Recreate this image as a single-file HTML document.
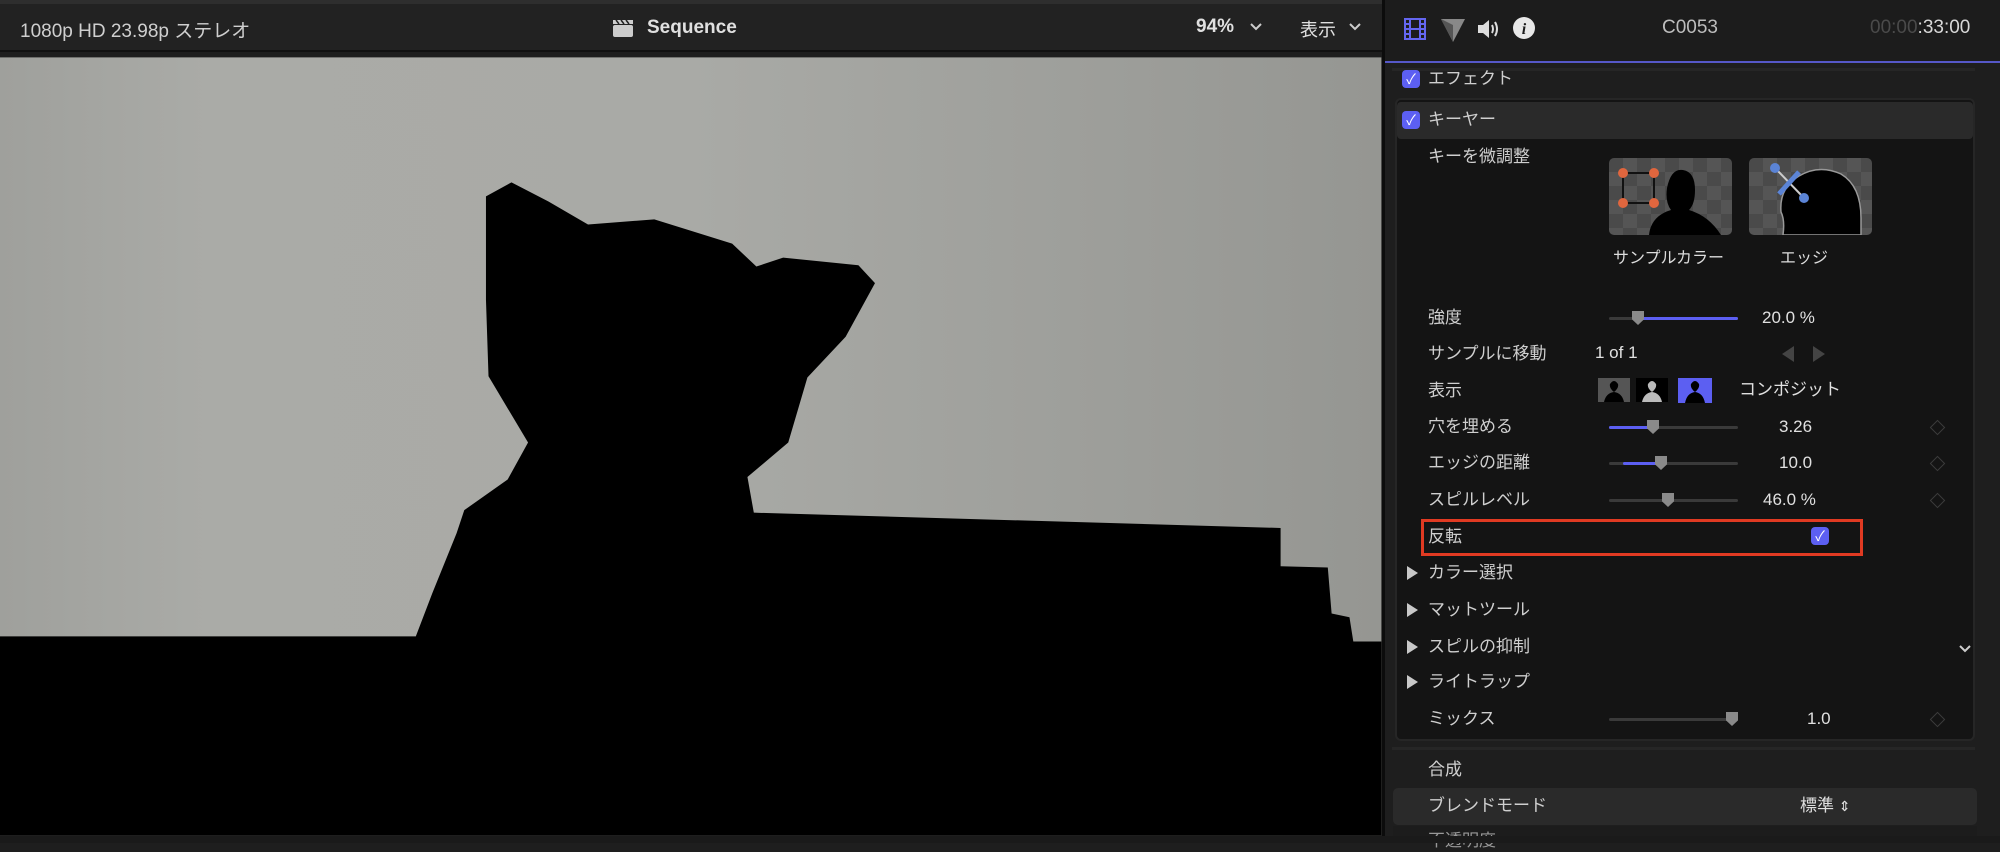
<!DOCTYPE html>
<html><head><meta charset="utf-8"><style>
*{margin:0;padding:0;box-sizing:border-box}
body{width:2000px;height:843px;background:#1e1e1e;overflow:hidden;position:relative;font-family:"Liberation Sans","Noto Sans CJK JP",sans-serif;color:#d0d0d0}
.a{position:absolute;white-space:nowrap}
.t{position:absolute;white-space:nowrap;font-size:17px;line-height:22px;color:#cfcfcf}
.cb{position:absolute;width:18px;height:18px;border-radius:4px;background:#5c5ff2;color:#fff;font-size:14px;line-height:18px;text-align:center}
.sl{position:absolute;height:3px;background:#3a3a3a;border-radius:2px}
.fill{position:absolute;height:3px;background:#5c5ff2;border-radius:2px}
.kn{position:absolute;width:12px;height:14px;background:#8a8a8a;clip-path:polygon(0 0,100% 0,100% 60%,50% 100%,0 60%)}
.dm{position:absolute;width:11px;height:11px;border:1px solid #3c3c3c;transform:rotate(45deg)}
.tri{position:absolute;width:0;height:0;border-left:11px solid #c8c8c8;border-top:7px solid transparent;border-bottom:7px solid transparent}
.v{position:absolute;font-size:17px;line-height:22px;color:#e0e0e0;white-space:nowrap}
</style></head><body>
<div class="a" style="left:0;top:0;width:1382px;height:52px;background:#222;border-top:4px solid #2e2e2e;border-bottom:2px solid #111"></div>
<div class="a" style="left:20px;top:16px;font-size:19px;color:#cfcfcf">1080p HD 23.98p ステレオ</div>
<svg class="a" style="left:612px;top:18px" width="22" height="20" viewBox="0 0 22 20"><rect x="1" y="7" width="20" height="12" rx="2" fill="#ccc"/><path d="M1 2 L21 2 L21 6 L1 6Z" fill="#ccc"/><path d="M4 2 L7 6 M9 2 L12 6 M14 2 L17 6" stroke="#222" stroke-width="1.5"/></svg>
<div class="a" style="left:647px;top:17px;font-size:19px;color:#e0e0e0;font-weight:bold">Sequence</div>
<div class="a" style="left:1196px;top:16px;font-size:19px;color:#e0e0e0;font-weight:bold">94%</div>
<svg class="a" style="left:1250px;top:23px" width="12" height="8"><path d="M1 1 L6 6 L11 1" stroke="#ccc" stroke-width="2" fill="none"/></svg>
<div class="a" style="left:1300px;top:16px;font-size:18px;color:#e0e0e0">表示</div>
<svg class="a" style="left:1349px;top:23px" width="12" height="8"><path d="M1 1 L6 6 L11 1" stroke="#ccc" stroke-width="2" fill="none"/></svg>
<svg class="a" style="left:0;top:0" width="1382" height="843" viewBox="0 0 1083.5 661" preserveAspectRatio="none">
<defs><linearGradient id="g" x1="0" x2="1" y1="0" y2="0"><stop offset="0" stop-color="#9fa09c"/><stop offset="0.15" stop-color="#aaaba7"/><stop offset="0.5" stop-color="#a9aaa6"/><stop offset="0.8" stop-color="#9d9e9a"/><stop offset="1" stop-color="#959692"/></linearGradient></defs>
<rect x="0" y="45" width="1083" height="610" fill="url(#g)"/>
<path d="M0 499 L326 499 L339 465 L358 418 L364 400 L398 376 L414 347 L383 295 L381 235 L381 154 L401 143 L430 158 L461 176 L513 172 L574 191 L593 209 L614 202 L673 208 L686 222 L663 264 L633 296 L618 347 L586 374 L591 402 L1004 414 L1004 444 L1041 445 L1044 481 L1058 484 L1061 503 L1083 503 L1083 655 L0 655 Z" fill="#000"/>
<rect x="0" y="655" width="1083" height="6" fill="#1e1e1e"/>
</svg>
<div class="a" style="left:1382px;top:0;width:3px;height:843px;background:#0c0c0c"></div>
<div class="a" style="left:1385px;top:0;width:615px;height:62px;background:#1c1c1c"></div>
<div class="a" style="left:1385px;top:61px;width:615px;height:2px;background:#5658c8"></div>
<svg class="a" style="left:1404px;top:18px" width="22" height="22" viewBox="0 0 22 22"><rect x="1" y="1" width="20" height="20" fill="none" stroke="#6466f0" stroke-width="2"/><rect x="6" y="1" width="10" height="20" fill="none" stroke="#6466f0" stroke-width="2"/><path d="M1 6H6M1 11H6M1 16H6M16 6H21M16 11H21M16 16H21M6 11H16" stroke="#6466f0" stroke-width="2"/></svg>
<svg class="a" style="left:1440px;top:17px" width="26" height="26"><path d="M1 2 L25 2 L13 25 Z" fill="#888"/><path d="M1 2 L13 8 L13 25Z" fill="#555"/></svg>
<svg class="a" style="left:1476px;top:18px" width="26" height="22"><path d="M2 7 H7 L13 2 V20 L7 15 H2Z" fill="#ddd"/><path d="M16 7 Q18 11 16 15 M19 4 Q23 11 19 18" stroke="#ddd" stroke-width="2" fill="none"/></svg>
<svg class="a" style="left:1512px;top:16px" width="24" height="24"><circle cx="12" cy="12" r="11" fill="#e8e8e8"/><text x="12" y="18" text-anchor="middle" font-family="Liberation Serif" font-style="italic" font-weight="bold" font-size="16" fill="#1c1c1c">i</text></svg>
<div class="a" style="left:1662px;top:17px;font-size:19px;color:#bdbdbd">C0053</div>
<div class="a" style="left:1870px;top:17px;font-size:19px;color:#4a4a4a">00:00<span style="color:#d8d8d8">:33:00</span></div>
<div class="a" style="left:1392px;top:68px;width:583px;height:3px;background:#262626"></div>
<div class="cb" style="left:1402px;top:70px">✓</div><div class="t" style="left:1428px;top:68px">エフェクト</div>
<div class="a" style="left:1395px;top:98px;width:580px;height:643px;background:#141414;border:2px solid #262626;border-radius:6px"></div>
<div class="a" style="left:1397px;top:102px;width:576px;height:37px;background:#2a2a2a;border-radius:4px"></div>
<div class="cb" style="left:1402px;top:111px">✓</div><div class="t" style="left:1428px;top:109px">キーヤー</div>
<div class="t" style="left:1428px;top:146px">キーを微調整</div>
<svg class="a" style="left:1609px;top:158px" width="123" height="77" viewBox="0 0 123 77"><defs><pattern id="ck" width="28" height="28" patternUnits="userSpaceOnUse"><rect width="28" height="28" fill="#555"/><rect width="14" height="14" fill="#4a4a4a"/><rect x="14" y="14" width="14" height="14" fill="#4a4a4a"/></pattern></defs><rect width="123" height="77" rx="5" fill="url(#ck)"/><path d="M40 77 Q42 58 62 52 Q56 44 58 30 Q62 10 74 12 Q86 14 86 32 Q86 46 80 52 Q100 58 112 77Z" fill="#000"/><rect x="14" y="15" width="31" height="30" fill="none" stroke="#111" stroke-width="2"/><circle cx="14" cy="15" r="5" fill="#e0663e"/><circle cx="45" cy="15" r="5" fill="#e0663e"/><circle cx="14" cy="45" r="5" fill="#e0663e"/><circle cx="45" cy="45" r="5" fill="#e0663e"/></svg>
<svg class="a" style="left:1749px;top:158px" width="123" height="77" viewBox="0 0 123 77"><rect width="123" height="77" rx="5" fill="url(#ck)"/><path d="M34 77 Q36 62 32 54 Q30 30 50 18 Q70 6 92 16 Q112 28 112 60 L112 77Z" fill="#000" stroke="#999" stroke-width="1.5"/><path d="M26 10 L55 40" stroke="#ccc" stroke-width="2"/><path d="M30 36 L50 14" stroke="#5b84d6" stroke-width="5"/><circle cx="26" cy="10" r="5" fill="#5b84d6"/><circle cx="55" cy="40" r="5" fill="#5b84d6"/></svg>
<div class="t" style="left:1613px;top:248px;font-size:16px;color:#ddd">サンプルカラー</div>
<div class="t" style="left:1780px;top:248px;font-size:16px;color:#ddd">エッジ</div>
<div class="t" style="left:1428px;top:307px">強度</div>
<div class="sl" style="left:1609px;top:317px;width:129px"></div><div class="fill" style="left:1637px;top:317px;width:101px"></div><div class="kn" style="left:1632px;top:311px"></div>
<div class="v" style="left:1762px;top:307px">20.0 %</div>
<div class="t" style="left:1428px;top:343px">サンプルに移動</div>
<div class="v" style="left:1595px;top:342px">1 of 1</div>
<div class="a" style="left:1782px;top:346px;border-right:12px solid #444;border-top:8px solid transparent;border-bottom:8px solid transparent"></div>
<div class="a" style="left:1813px;top:346px;border-left:12px solid #444;border-top:8px solid transparent;border-bottom:8px solid transparent"></div>
<div class="t" style="left:1428px;top:380px">表示</div>
<svg class="a" style="left:1598px;top:378px" width="116" height="26"><rect width="32" height="24" fill="#555"/><rect x="38" width="32" height="24" fill="#000"/><rect x="80" width="34" height="25" fill="#5c5ff2"/><path d="M6 24 Q8 15 16 14 Q11 10 12 6 Q16 0 20 6 Q21 10 16 14 Q24 15 26 24Z" fill="#000"/><path d="M44 24 Q46 15 54 14 Q49 10 50 6 Q54 0 58 6 Q59 10 54 14 Q62 15 64 24Z" fill="#bbb"/><path d="M87 25 Q89 15 97 14 Q92 10 93 6 Q97 0 101 6 Q102 10 97 14 Q105 15 107 25Z" fill="#000"/></svg>
<div class="v" style="left:1739px;top:379px">コンポジット</div>
<div class="t" style="left:1428px;top:416px">穴を埋める</div>
<div class="sl" style="left:1609px;top:426px;width:129px"></div><div class="fill" style="left:1609px;top:426px;width:45px"></div><div class="kn" style="left:1647px;top:420px"></div>
<div class="v" style="left:1779px;top:416px">3.26</div><div class="dm" style="left:1932px;top:422px"></div>
<div class="t" style="left:1428px;top:452px">エッジの距離</div>
<div class="sl" style="left:1609px;top:462px;width:129px"></div><div class="fill" style="left:1623px;top:462px;width:40px"></div><div class="kn" style="left:1655px;top:456px"></div>
<div class="v" style="left:1779px;top:452px">10.0</div><div class="dm" style="left:1932px;top:458px"></div>
<div class="t" style="left:1428px;top:489px">スピルレベル</div>
<div class="sl" style="left:1609px;top:499px;width:129px"></div><div class="kn" style="left:1662px;top:493px"></div>
<div class="v" style="left:1763px;top:489px">46.0 %</div><div class="dm" style="left:1932px;top:495px"></div>
<div class="a" style="left:1421px;top:519px;width:442px;height:37px;border:3px solid #e03a22"></div>
<div class="t" style="left:1428px;top:526px">反転</div>
<div class="cb" style="left:1811px;top:527px">✓</div>
<div class="tri" style="left:1407px;top:566px"></div><div class="t" style="left:1428px;top:562px">カラー選択</div>
<div class="tri" style="left:1407px;top:603px"></div><div class="t" style="left:1428px;top:599px">マットツール</div>
<div class="tri" style="left:1407px;top:640px"></div><div class="t" style="left:1428px;top:636px">スピルの抑制</div>
<svg class="a" style="left:1958px;top:644px" width="14" height="9"><path d="M2 2 L7 7 L12 2" stroke="#ccc" stroke-width="2" fill="none"/></svg>
<div class="tri" style="left:1407px;top:675px"></div><div class="t" style="left:1428px;top:671px">ライトラップ</div>
<div class="t" style="left:1428px;top:708px">ミックス</div>
<div class="sl" style="left:1609px;top:718px;width:129px"></div><div class="kn" style="left:1726px;top:712px"></div>
<div class="v" style="left:1807px;top:708px">1.0</div><div class="dm" style="left:1932px;top:714px"></div>
<div class="a" style="left:1392px;top:747px;width:583px;height:3px;background:#262626"></div>
<div class="t" style="left:1428px;top:759px">合成</div>
<div class="a" style="left:1393px;top:788px;width:584px;height:37px;background:#2a2a2a;border-radius:5px"></div>
<div class="t" style="left:1428px;top:795px">ブレンドモード</div>
<div class="v" style="left:1800px;top:795px">標準 <span style="font-size:14px">⇕</span></div>
<div class="a" style="left:1393px;top:826px;width:584px;height:17px;background:#1c1c1c"></div>
<div class="t" style="left:1428px;top:830px;color:#999">不透明度</div>
<div class="a" style="left:0;top:836px;width:2000px;height:7px;background:#1a1a1a"></div>
</body></html>
